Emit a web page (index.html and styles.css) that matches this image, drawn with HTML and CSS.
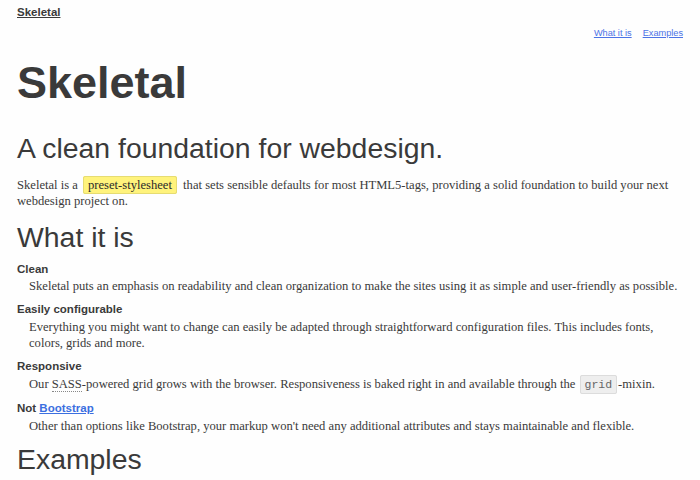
FILE: index.html
```html
<!DOCTYPE html>
<html lang="en">
<head>
<meta charset="utf-8">
<title>Skeletal</title>
<link rel="stylesheet" href="styles.css">
</head>
<body>
<div class="page">
  <header class="site-header">
    <a class="brand" href="#">Skeletal</a>
    <nav class="nav">
      <a href="#what">What it is</a>
      <a href="#examples">Examples</a>
    </nav>
  </header>
  <main>
    <h1 class="title">Skeletal</h1>
    <h2 class="lead">A clean foundation for webdesign.</h2>
    <p class="intro">Skeletal is a <code class="mark">preset-stylesheet</code> that sets sensible defaults for most HTML5-tags, providing a solid foundation to build your next webdesign project on.</p>
    <h2 class="section" id="what">What it is</h2>
    <dl class="features">
      <dt>Clean</dt>
      <dd>Skeletal puts an emphasis on readability and clean organization to make the sites using it as simple and user-friendly as possible.</dd>
      <dt>Easily configurable</dt>
      <dd>Everything you might want to change can easily be adapted through straightforward configuration files. This includes fonts, colors, grids and more.</dd>
      <dt>Responsive</dt>
      <dd>Our <abbr title="Syntactically Awesome Style Sheets">SASS</abbr>-powered grid grows with the browser. Responsiveness is baked right in and available through the <code class="code">grid</code>-mixin.</dd>
      <dt>Not <a href="#">Bootstrap</a></dt>
      <dd>Other than options like Bootstrap, your markup won't need any additional attributes and stays maintainable and flexible.</dd>
    </dl>
    <h2 class="section" id="examples">Examples</h2>
  </main>
</div>
</body>
</html>
```

FILE: styles.css
```css
html, body {
  margin: 0;
  padding: 0;
  background: #fefefe;
}

body {
  font-family: "Liberation Serif", "DejaVu Serif", serif;
  font-size: 12.6px;
  line-height: 16px;
  color: #3a3a3a;
}

.page {
  padding: 5px 17px 0 17px;
}

.site-header {
  display: flex;
  flex-direction: column;
}

.brand {
  font-family: "Liberation Sans", Arial, sans-serif;
  font-size: 11.5px;
  line-height: 15px;
  font-weight: bold;
  color: #3a3a3a;
  align-self: flex-start;
}

.nav {
  display: flex;
  justify-content: flex-end;
  gap: 11px;
  margin-top: 7px;
}

.nav a {
  font-family: "Liberation Sans", Arial, sans-serif;
  font-size: 9.2px;
  line-height: 12px;
  color: #4c73e6;
}

.title {
  font-family: "Liberation Sans", Arial, sans-serif;
  font-size: 45px;
  line-height: 46px;
  font-weight: bold;
  margin: 21px 0 0 0;
  color: #3a3a3a;
}

.lead, .section {
  font-family: "Liberation Sans", Arial, sans-serif;
  font-weight: normal;
  font-size: 28.4px;
  line-height: 32px;
  color: #3a3a3a;
  margin: 0;
}

.lead {
  margin-top: 26px;
}

.intro {
  margin: 13px 0 0 0;
}

.mark {
  font-family: "Liberation Serif", "DejaVu Serif", serif;
  font-size: 12.6px;
  color: #2a2a2a;
  background: #fff37c;
  border: 1px solid #e6dc72;
  border-radius: 2px;
  padding: 1px 4px;
  margin: 0 3px 0 2px;
}

.section {
  margin-top: 12px;
}

.features {
  margin: 8px 0 0 0;
}

.features dt {
  font-family: "Liberation Sans", Arial, sans-serif;
  font-size: 11.5px;
  font-weight: bold;
  line-height: 17px;
}

.features dt + dd {
  padding-top: 1px;
}

.features dt:first-child + dd {
  padding-top: 0;
}

.features dt a {
  color: #3b6fe0;
}

.features dd {
  margin: 0 0 7px 12px;
}

abbr {
  text-decoration: none;
  border-bottom: 1px dotted #888;
}

.code {
  font-family: "Liberation Mono", "DejaVu Sans Mono", monospace;
  font-size: 11.5px;
  color: #666;
  background: #eeeeee;
  border: 1px solid #dcdcdc;
  border-radius: 2px;
  padding: 2px 4px;
  margin: 0 1px;
}

#examples {
  margin-top: 9px;
}
```
